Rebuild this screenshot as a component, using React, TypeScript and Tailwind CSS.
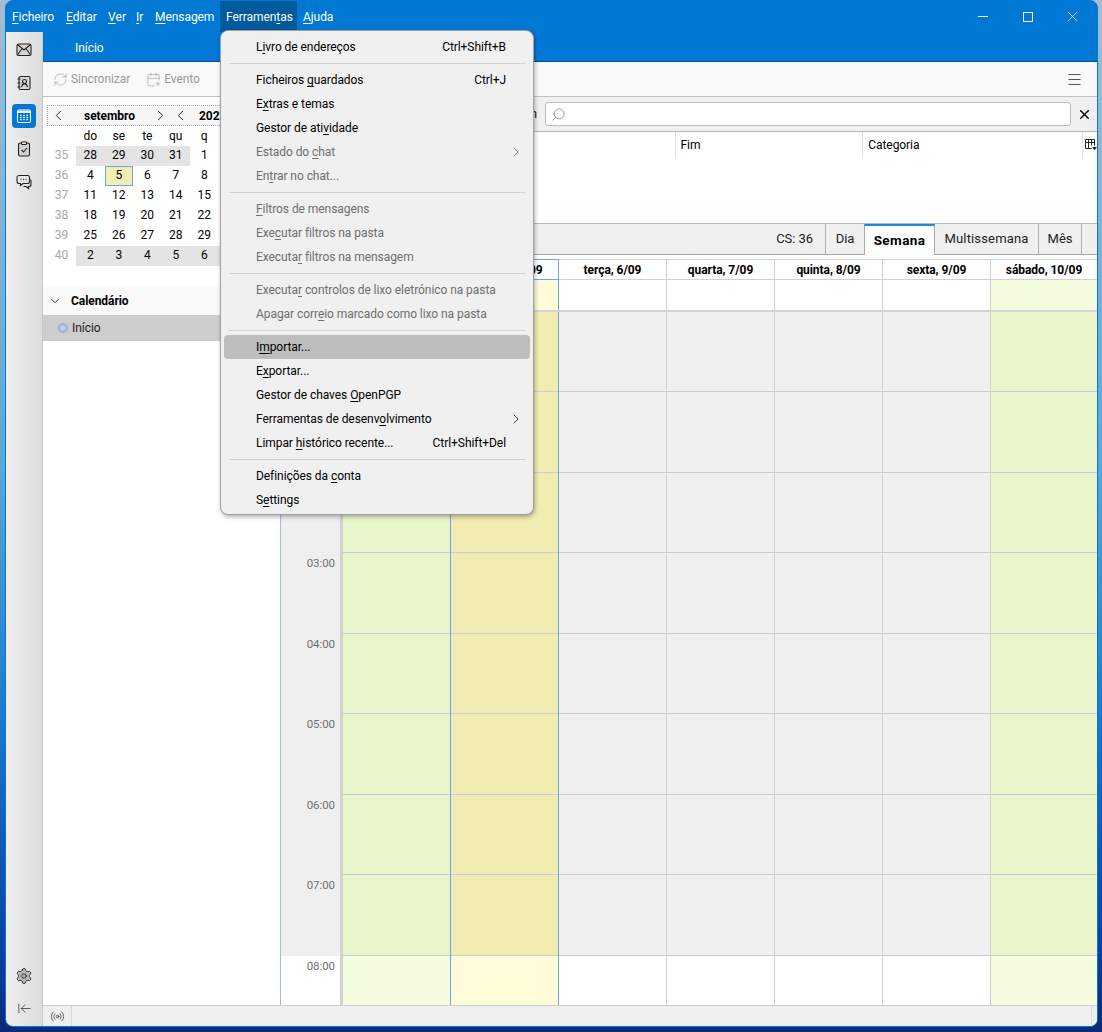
import { ArrowLeftToLine, CalendarPlus, ChevronDown, ChevronLeft, ChevronRight, Menu, Radio, RefreshCw, Search, Settings, X } from 'lucide-react';

const menuBar = [
  { label: '&Ficheiro', width: 'w-[54px]' },
  { label: '&Editar', width: 'w-[42px]' },
  { label: '&Ver', width: 'w-[28px]' },
  { label: '&Ir', width: 'w-[19px]' },
  { label: '&Mensagem', width: 'w-[71px]' },
  { label: 'Ferramen&tas', width: 'w-[77px]', open: true },
  { label: '&Ajuda', width: 'w-[42px]' },
];

type MenuEntry = { label: string; shortcut?: string; disabled?: boolean; arrow?: boolean; active?: boolean } | 'sep';

const toolsMenu: MenuEntry[] = [
  { label: 'L&ivro de endereços', shortcut: 'Ctrl+Shift+B' },
  'sep',
  { label: 'Ficheiros &guardados', shortcut: 'Ctrl+J' },
  { label: 'E&xtras e temas' },
  { label: 'Gestor de ati&vidade' },
  { label: 'Estado do &chat', disabled: true, arrow: true },
  { label: 'En&trar no chat...', disabled: true },
  'sep',
  { label: '&Filtros de mensagens', disabled: true },
  { label: 'Exe&cutar filtros na pasta', disabled: true },
  { label: 'Executa&r filtros na mensagem', disabled: true },
  'sep',
  { label: 'Executa&r controlos de lixo eletrónico na pasta', disabled: true },
  { label: 'Apagar corr&eio marcado como lixo na pasta', disabled: true },
  'sep',
  { label: 'I&mportar...', active: true },
  { label: 'E&xportar...' },
  { label: 'Gestor de chaves &OpenPGP' },
  { label: 'Ferramentas de desenv&olvimento', arrow: true },
  { label: 'Limpar &histórico recente...', shortcut: 'Ctrl+Shift+Del' },
  'sep',
  { label: 'Definições da &conta' },
  { label: 'S&ettings' },
];

const monthRows = [
  { week: 35, days: [28, 29, 30, 31, 1, 2, 3], shaded: 4 },
  { week: 36, days: [4, 5, 6, 7, 8, 9, 10], shaded: 0 },
  { week: 37, days: [11, 12, 13, 14, 15, 16, 17], shaded: 0 },
  { week: 38, days: [18, 19, 20, 21, 22, 23, 24], shaded: 0 },
  { week: 39, days: [25, 26, 27, 28, 29, 30, 1], shaded: 0 },
  { week: 40, days: [2, 3, 4, 5, 6, 7, 8], shaded: 7 },
];

const hours = ['00:00', '01:00', '02:00', '03:00', '04:00', '05:00', '06:00', '07:00'];

const days = [
  { title: 'domingo, 4/09', line: 'border-[#d0d0d0]', light: 'bg-[#f4fde0]', off: 'bg-[#e9f5cb]', width: 'w-[107px] border-r-0' },
  { title: 'segunda, 5/09', line: 'border-[#6aa9e0]', light: 'bg-[#fefcd9]', off: 'bg-[#f1ecb1]', width: 'w-[109px] border-l' },
  { title: 'terça, 6/09', line: 'border-[#d0d0d0]', light: 'bg-white', off: 'bg-[#efefef]', width: 'w-[108px]' },
  { title: 'quarta, 7/09', line: 'border-[#d0d0d0]', light: 'bg-white', off: 'bg-[#efefef]', width: 'w-[108px]' },
  { title: 'quinta, 8/09', line: 'border-[#d0d0d0]', light: 'bg-white', off: 'bg-[#efefef]', width: 'w-[108px]' },
  { title: 'sexta, 9/09', line: 'border-[#d0d0d0]', light: 'bg-white', off: 'bg-[#efefef]', width: 'w-[108px]' },
  { title: 'sábado, 10/09', line: 'border-[#d0d0d0]', light: 'bg-[#f4fde0]', off: 'bg-[#e9f5cb]', width: 'flex-1 border-r-0' },
];

// '&' marks the access key, same as in the menu definitions
function AccessLabel({ text }: { text: string }) {
  const at = text.indexOf('&');
  if (at < 0) return <>{text}</>;
  return (
    <>
      {text.slice(0, at)}
      <u className="underline-offset-2">{text[at + 1]}</u>
      {text.slice(at + 2)}
    </>
  );
}

function MailIcon() {
  return (
    <svg width="16" height="14" viewBox="0 0 16 14" fill="none" stroke="#222" strokeWidth="1.1">
      <rect x="1" y="1" width="14" height="11.5" rx="1.5" fill="#d4d4d4" />
      <path d="M1.5 1.500 8 7l6.500-5.500M1.500 12 6 5.500M14.500 12 10 5.500" />
    </svg>
  );
}

function ContactsIcon() {
  return (
    <svg width="16" height="16" viewBox="0 0 16 16" fill="none" stroke="#222" strokeWidth="1.1">
      <rect x="3" y="1.500" width="11" height="13" rx="1.500" fill="#d8d8d8" />
      <circle cx="8.500" cy="6.500" r="2" />
      <path d="M5.500 12c.3-2 1.500-3 3-3s2.700 1 3 3M1.500 4h3M1.500 8h3M1.500 12h3" />
    </svg>
  );
}

function CalendarIcon() {
  return (
    <svg width="16" height="16" viewBox="0 0 16 16" fill="none" stroke="#fff" strokeWidth="1.1">
      <rect x="1.500" y="2" width="13" height="12.500" rx="1.500" />
      <path d="M2 3.800h12" strokeWidth="2.200" />
      <path d="M4 7.300h1.500M7.250 7.300h1.500M10.500 7.300h1.500M4 9.500h1.500M7.250 9.500h1.500M10.500 9.500h1.500M4 11.700h1.500M7.250 11.700h1.500M10.500 11.700h1.500" strokeWidth="1.300" />
    </svg>
  );
}

function TasksIcon() {
  return (
    <svg width="16" height="16" viewBox="0 0 16 16" fill="none" stroke="#222" strokeWidth="1.1">
      <rect x="2.500" y="2" width="11" height="13" rx="1.500" fill="#d0d0d0" />
      <rect x="5.500" y="1" width="5" height="2.500" rx=".8" fill="#eee" />
      <path d="m5.500 9 2 2 3.500-4" />
    </svg>
  );
}

function ChatIcon() {
  return (
    <svg width="16" height="16" viewBox="0 0 16 16" fill="none" stroke="#222" strokeWidth="1.1">
      <path d="M3 1.500h8.500a2 2 0 0 1 2 2v4a2 2 0 0 1-2 2H7l-2.500 2v-2H3a2 2 0 0 1-2-2v-4a2 2 0 0 1 2-2Z" fill="#e8e8e8" />
      <path d="M14.500 5.500c.4.300.500.800.500 1.500v3.500a2 2 0 0 1-2 2h-.500v2l-2.500-2H7.500" />
      <path d="M4.500 5.500h.8M7 5.500h.8M9.500 5.500h.8" strokeWidth="1.300" />
    </svg>
  );
}

function ColumnPickerIcon() {
  return (
    <svg width="13" height="13" viewBox="0 0 13 13" fill="none" stroke="#222" strokeWidth="1">
      <path d="M7.500 10.500h-6v-9h9v6M1.500 4.500h9M4.500 1.500v9M7.500 1.500v6" />
      <path d="M8 9h5l-2.500 3.200Z" fill="#222" stroke="none" />
    </svg>
  );
}

function ToolsMenu() {
  return (
    <div className="absolute left-[220px] top-[30px] z-10 flex w-[314px] flex-col rounded-[8px] border border-[#a0a0a0] bg-[#f0f0f0] px-[3px] pb-[2px] pt-[4px] text-black shadow-[1px_2px_4px_rgba(0,0,0,0.3)]">
      {toolsMenu.map((entry, i) =>
        entry === 'sep' ? (
          <div key={i} className="flex h-[9px] items-center px-[5px]">
            <div className="h-px w-full bg-[#d0d0d0]" />
          </div>
        ) : (
          <div
            key={i}
            className={`flex h-[24px] shrink-0 items-center rounded-[4px] pl-[32px] pr-[24px] ${entry.active ? 'bg-[#bdbdbd]' : ''} ${entry.disabled ? 'text-[#6e6e6e]' : ''}`}
          >
            <span className="flex-1 whitespace-nowrap">
              <AccessLabel text={entry.label} />
            </span>
            {entry.shortcut && <span className="whitespace-nowrap">{entry.shortcut}</span>}
            {entry.arrow && (
              <ChevronRight size={16} strokeWidth={1.1} className={`-mr-[18px] ${entry.disabled ? 'text-[#6e6e6e]' : 'text-black'}`} />
            )}
          </div>
        ),
      )}
    </div>
  );
}

function MiniMonth() {
  return (
    <div className="px-[4px] pt-[8px]">
      <div className="flex h-[21px] items-center overflow-hidden border border-dotted border-[#aaa] bg-[#f7f7f7] text-black">
        <span className="flex w-[21px] justify-center"><ChevronLeft size={17} strokeWidth={1.2} /></span>
        <span className="w-[81px] text-center font-bold">setembro</span>
        <span className="flex w-[20px] justify-center"><ChevronRight size={17} strokeWidth={1.2} /></span>
        <span className="flex w-[20px] justify-center"><ChevronLeft size={17} strokeWidth={1.2} /></span>
        <span className="w-[50px] pl-[9px] font-bold">2022</span>
        <span className="flex w-[20px] justify-center"><ChevronRight size={17} strokeWidth={1.2} /></span>
      </div>
      <div className="grid auto-rows-[20px] grid-cols-[29px_repeat(7,28.5px)] text-center leading-[19px] text-black">
        <div className="h-[18px]" />
        {['do', 'se', 'te', 'qu', 'q', 's', 's'].map((d, i) => (
          <div key={i} className="h-[18px] leading-[20px]">{d}</div>
        ))}
        {monthRows.map((row) => (
          <div key={row.week} className="contents">
            <div className="text-[#a8a8a8]">{row.week}</div>
            {row.days.map((day, i) => {
              const today = row.week === 36 && day === 5;
              return (
                <div
                  key={i}
                  className={today ? 'border border-[#6aa9e0] bg-[#f2eeb3] leading-[17px]' : i < row.shaded ? 'bg-[#e4e4e4]' : ''}
                >
                  {day}
                </div>
              );
            })}
          </div>
        ))}
      </div>
    </div>
  );
}

function LeftPane() {
  return (
    <div className="flex w-[237px] shrink-0 flex-col bg-white">
      <MiniMonth />
      <div className="mt-[21px] flex h-[28px] items-center bg-[#f9f9f9] pl-[4px] font-bold text-black">
        <ChevronDown size={14} strokeWidth={1.3} className="ml-[1px]" />
        <span className="ml-[9px]">Calendário</span>
      </div>
      <div className="flex h-[26px] items-center bg-[#cdcdcd] pl-[15px] text-[#222]">
        <span className="h-[10px] w-[10px] rounded-full border-2 border-[#90b4e8]" />
        <span className="ml-[4px]">Início</span>
      </div>
    </div>
  );
}

function EventList() {
  return (
    <>
      <div className="flex h-[35px] shrink-0 items-center justify-end border-b border-[#b4b4b4] bg-[#f0f0f0] pr-[5px]">
        <span className="mr-[8px] text-black">que contêm</span>
        <div className="flex h-[24px] w-[526px] items-center rounded-[3px] border border-[#bbb] bg-white pl-[5px]">
          <Search size={15} strokeWidth={1} className="-scale-x-100 text-[#666]" />
        </div>
        <X size={15} strokeWidth={2.2} className="ml-[6px] text-black" />
      </div>
      <div className="h-[92px] shrink-0 border-b border-[#a9bcd0] bg-white">
        <div className="flex h-[25px] items-center text-black">
          <div className="flex h-full w-[200px] items-center pl-[5px]">Título</div>
          <div className="flex h-full w-[194px] items-center pl-[5px]">Início</div>
          <div className="flex h-full w-[188px] items-center border-l border-[#e0e0e0] pl-[5px]">Fim</div>
          <div className="flex h-full w-[220px] items-center border-l border-[#e0e0e0] pl-[5px]">Categoria</div>
          <div className="flex h-full flex-1 items-center border-l border-[#e0e0e0] pl-[1px]"><ColumnPickerIcon /></div>
        </div>
      </div>
    </>
  );
}

function ViewTabs() {
  return (
    <div className="flex h-[31px] shrink-0 items-stretch justify-end border-b border-[#a8a8a8] bg-[#f0f0f0] pr-[15px] text-[13px] text-[#222]">
      <div className="mr-[12px] flex items-center">CS: 36</div>
      <div className="flex w-[39px] items-center justify-center border-l border-[#b0b0b0]">Dia</div>
      <div className="-mb-px flex w-[71px] items-center justify-center border-x border-[#a8a8a8] border-t-2 border-t-[#1e88e0] bg-white text-[13.5px] font-bold tracking-[0.4px] text-black">Semana</div>
      <div className="flex w-[103px] items-center justify-center tracking-[0.15px]">Multissemana</div>
      <div className="flex w-[44px] items-center justify-center border-x border-[#b0b0b0]">Mês</div>
    </div>
  );
}

function DayView() {
  return (
    <div className="flex min-h-0 flex-1 flex-col bg-white pt-[4px]">
      <div className="flex h-[21px] shrink-0">
        <div className="w-[62px] shrink-0 border-y border-[#d0d0d0]" />
        {days.map((day) => (
          <div key={day.title} className={`flex items-center justify-center whitespace-nowrap border-y border-r font-bold text-black ${day.width} ${day.line}`}>
            {day.title}
          </div>
        ))}
      </div>
      <div className="flex h-[32px] shrink-0 border-b-[2px] border-[#d4d4d4]">
        <div className="w-[62px] shrink-0" />
        {days.map((day) => (
          <div key={day.title} className={`border-r ${day.width} ${day.line} ${day.light}`} />
        ))}
      </div>
      <div className="flex min-h-0 flex-1">
        <div className="flex w-[59px] shrink-0 flex-col text-right text-[11.5px] text-[#707070]">
          {hours.map((hour, i) => (
            <div key={hour} className={`bg-[#efefef] pr-[5px] pt-[2px] ${i % 2 ? 'h-[81px]' : 'h-[80px]'}`}>{hour}</div>
          ))}
          <div className="flex-1 bg-white pr-[5px] pt-[2px]">08:00</div>
        </div>
        <div className="w-[3px] shrink-0 bg-[#d2d2d2]" />
        {days.map((day) => (
          <div key={day.title} className={`flex flex-col border-r ${day.width} ${day.line} ${day.light}`}>
            {hours.map((hour, i) => (
              <div key={hour} className={`border-b border-[#c8ccd4] ${day.off} ${i % 2 ? 'h-[81px]' : 'h-[80px]'}`} />
            ))}
          </div>
        ))}
      </div>
    </div>
  );
}

export default function App() {
  return (
    <div className="relative h-[1032px] w-[1102px] overflow-hidden bg-[linear-gradient(180deg,#a4bdd2_0%,#5aa8d8_45%,#1a78d0_70%,#0a3fa8_92%,#0b2a78_100%)] pb-[5px] pl-[5px] pr-[4px] font-['Roboto',sans-serif] text-[12px] tracking-[-0.06px]">
      <div className="flex h-full flex-col overflow-hidden rounded-[8px] border border-[#0078d4] bg-[#0078d4]">
        <div className="flex h-[31px] shrink-0 items-stretch pr-[2px] text-white">
          {menuBar.map((item) => (
            <div key={item.label} className={`flex items-center whitespace-nowrap pl-[6px] ${item.width} ${item.open ? 'bg-[#005a9e]' : ''}`}>
              <AccessLabel text={item.label} />
            </div>
          ))}
          <div className="flex-1" />
          <div className="flex w-[45px] items-center justify-center"><div className="h-px w-[10px] bg-white" /></div>
          <div className="flex w-[45px] items-center justify-center"><div className="h-[10px] w-[10px] border border-white" /></div>
          <div className="flex w-[45px] items-center justify-center"><X size={17} strokeWidth={0.9} /></div>
        </div>

        <div className="flex min-h-0 flex-1">
          <div className="flex w-[37px] shrink-0 flex-col items-center border-r border-[#c8c8c8] bg-[linear-gradient(90deg,#eeeeee,#dcdcdc)] pt-[10px]">
            <div className="flex h-[16px] items-center"><MailIcon /></div>
            <div className="mt-[17px] flex h-[16px] items-center"><ContactsIcon /></div>
            <div className="mt-[13px] flex h-[24px] w-[24px] items-center justify-center rounded-[4px] bg-[#0078d4]"><CalendarIcon /></div>
            <div className="mt-[13px] flex h-[16px] items-center"><TasksIcon /></div>
            <div className="mt-[17px] flex h-[16px] items-center"><ChatIcon /></div>
            <div className="flex-1" />
            <Settings size={18} strokeWidth={1.2} className="fill-[#b8b8b8] text-[#222]" />
            <ArrowLeftToLine size={15} strokeWidth={1.1} className="mb-[10px] mt-[16px] text-[#222]" />
          </div>

          <div className="flex min-w-0 flex-1 flex-col bg-white">
            <div className="flex h-[30px] shrink-0 items-center border-b border-[#00508c] bg-[#0078d4] pl-[32px] pt-[2px] text-white">Início</div>
            <div className="flex h-[35px] shrink-0 items-center border-b border-[#c0c0c0] bg-[#f9f9fa] pl-[10px] pr-[14px] text-[#9a9a9a]">
              <RefreshCw size={15} strokeWidth={1} />
              <span className="ml-[3px]">Sincronizar</span>
              <CalendarPlus size={15} strokeWidth={1} className="ml-[16px]" />
              <span className="ml-[3px]">Evento</span>
              <div className="flex-1" />
              <Menu size={17} strokeWidth={1.1} className="text-[#222]" />
            </div>
            <div className="flex min-h-0 flex-1">
              <LeftPane />
              <div className="flex min-w-0 flex-1 flex-col border-l border-[#a4bcd8]">
                <EventList />
                <ViewTabs />
                <DayView />
              </div>
            </div>
            <div className="flex h-[21px] shrink-0 items-stretch border-t border-[#cfcfcf] bg-[#efefef] pr-[5px]">
              <div className="flex w-[29px] items-center justify-center border-r border-[#dcdcdc]"><Radio size={15} strokeWidth={1.1} className="text-[#222]" /></div>
              <div className="flex-1 border-r border-[#dcdcdc]" />
            </div>
          </div>
        </div>
      </div>
      <ToolsMenu />
    </div>
  );
}
